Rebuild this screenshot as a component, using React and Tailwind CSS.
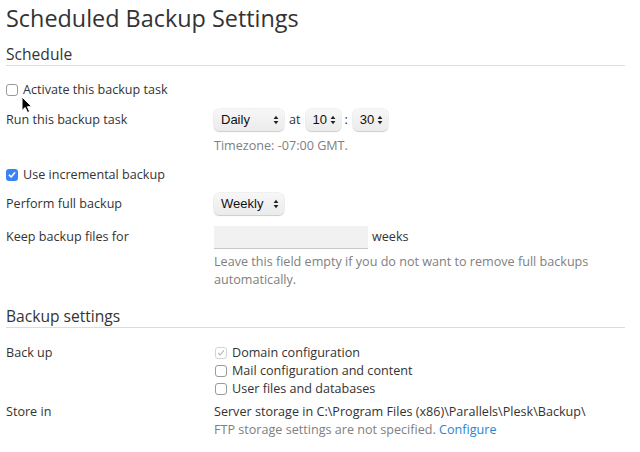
import React from "react";

function Arrows() {
  return (
    <svg width="6" height="10" viewBox="0 0 6 10" className="shrink-0">
      <path d="M3 0.8 L5.4 4 L0.6 4 Z" fill="#222" />
      <path d="M3 9.2 L5.4 6 L0.6 6 Z" fill="#222" />
    </svg>
  );
}

function Select({ value, width }) {
  return (
    <div
      className="flex h-[22px] items-center justify-between rounded-[5px] bg-gradient-to-b from-[#f7f7f7] to-[#ebebeb] pl-[7px] pr-[5px] shadow-[0_0_0_0.5px_rgba(0,0,0,0.12),0_1px_1px_rgba(0,0,0,0.15)]"
      style={{ width }}
    >
      <span className="font-['Liberation_Sans',Arial,sans-serif] text-[13px] text-[#111]">{value}</span>
      <Arrows />
    </div>
  );
}

function Box({ checked, disabled }) {
  if (checked && !disabled) {
    return (
      <span className="flex h-[12px] w-[12px] shrink-0 items-center justify-center rounded-[3px] bg-[#3b82f6]">
        <svg width="8" height="8" viewBox="0 0 8 8">
          <path d="M1.3 4.2 L3.2 6 L6.7 1.8" fill="none" stroke="#fff" strokeWidth="1.6" strokeLinecap="round" strokeLinejoin="round" />
        </svg>
      </span>
    );
  }
  if (checked && disabled) {
    return (
      <span className="flex h-[12px] w-[12px] shrink-0 items-center justify-center rounded-[3px] border border-[#d4d4d4] bg-white">
        <svg width="8" height="8" viewBox="0 0 8 8">
          <path d="M1.5 4.2 L3.2 6 L6.5 1.8" fill="none" stroke="#b5b5b5" strokeWidth="1.1" strokeLinecap="round" strokeLinejoin="round" />
        </svg>
      </span>
    );
  }
  return <span className="block h-[12px] w-[12px] shrink-0 rounded-[3px] border border-[#9a9a9a] bg-white" />;
}

function Label({ children }) {
  return <div className="w-[208px] shrink-0">{children}</div>;
}

export default function App() {
  return (
    <div className="relative h-[452px] w-[640px] overflow-hidden bg-white px-[6px] font-['Open_Sans',sans-serif] text-[12.6px] text-[#333]">
      <h1 className="h-[37px] text-[23.4px] leading-[37px] text-[#333]">Scheduled Backup Settings</h1>

      <h2 className="mt-[6px] mr-[9px] border-b border-[#dcdcdc] text-[15.6px] leading-[22px] text-[#333]">Schedule</h2>

      <div className="mt-[14px] flex h-[20px] items-center gap-[5px]">
        <Box />
        <span>Activate this backup task</span>
      </div>

      <div className="mt-[9px] flex h-[22px] items-center">
        <Label>Run this backup task</Label>
        <Select value="Daily" width={70} />
        <span className="ml-[5px] mr-[5px]">at</span>
        <Select value="10" width={35} />
        <span className="ml-[4px] mr-[5px]">:</span>
        <Select value="30" width={35} />
      </div>

      <div className="mt-[6px] flex leading-[18px]">
        <Label />
        <span className="text-[#808080]">Timezone: -07:00 GMT.</span>
      </div>

      <div className="mt-[10px] flex h-[20px] items-center gap-[5px]">
        <Box checked />
        <span>Use incremental backup</span>
      </div>

      <div className="mt-[8px] flex h-[22px] items-center">
        <Label>Perform full backup</Label>
        <Select value="Weekly" width={70} />
      </div>

      <div className="mt-[11px] flex h-[23px] items-center">
        <Label>Keep backup files for</Label>
        <div className="h-[23px] w-[154px] border-b border-[#c8c8c8] bg-[#f1f1f1]" />
        <span className="ml-[4px]">weeks</span>
      </div>

      <div className="mt-[4px] flex leading-[18px]">
        <Label />
        <span className="w-[390px] text-[#808080]">
          Leave this field empty if you do not want to remove full backups automatically.
        </span>
      </div>

      <h2 className="mt-[16px] mr-[9px] border-b border-[#dcdcdc] text-[15.6px] leading-[22px] text-[#333]">Backup settings</h2>

      <div className="mt-[16px] flex leading-[18px]">
        <Label>Back up</Label>
        <div className="flex flex-col">
          <div className="flex h-[18px] items-center gap-[5px] pl-[1px]">
            <Box checked disabled />
            <span>Domain configuration</span>
          </div>
          <div className="flex h-[18px] items-center gap-[5px] pl-[1px]">
            <Box />
            <span>Mail configuration and content</span>
          </div>
          <div className="flex h-[18px] items-center gap-[5px] pl-[1px]">
            <Box />
            <span>User files and databases</span>
          </div>
        </div>
      </div>

      <div className="mt-[5px] flex leading-[18px]">
        <Label>Store in</Label>
        <div className="flex flex-col">
          <span>Server storage in C:\Program Files (x86)\Parallels\Plesk\Backup\</span>
          <span className="text-[#808080]">
            FTP storage settings are not specified. <span className="text-[#2a85d0]">Configure</span>
          </span>
        </div>
      </div>

      <svg className="absolute left-[21px] top-[96px]" width="12" height="18" viewBox="0 0 12 18">
        <path d="M1 1 L1 14.5 L4.2 11.5 L6.5 16.5 L8.6 15.6 L6.4 10.7 L10.8 10.7 Z" fill="#000" stroke="#fff" strokeWidth="1" strokeLinejoin="round" />
      </svg>
    </div>
  );
}
